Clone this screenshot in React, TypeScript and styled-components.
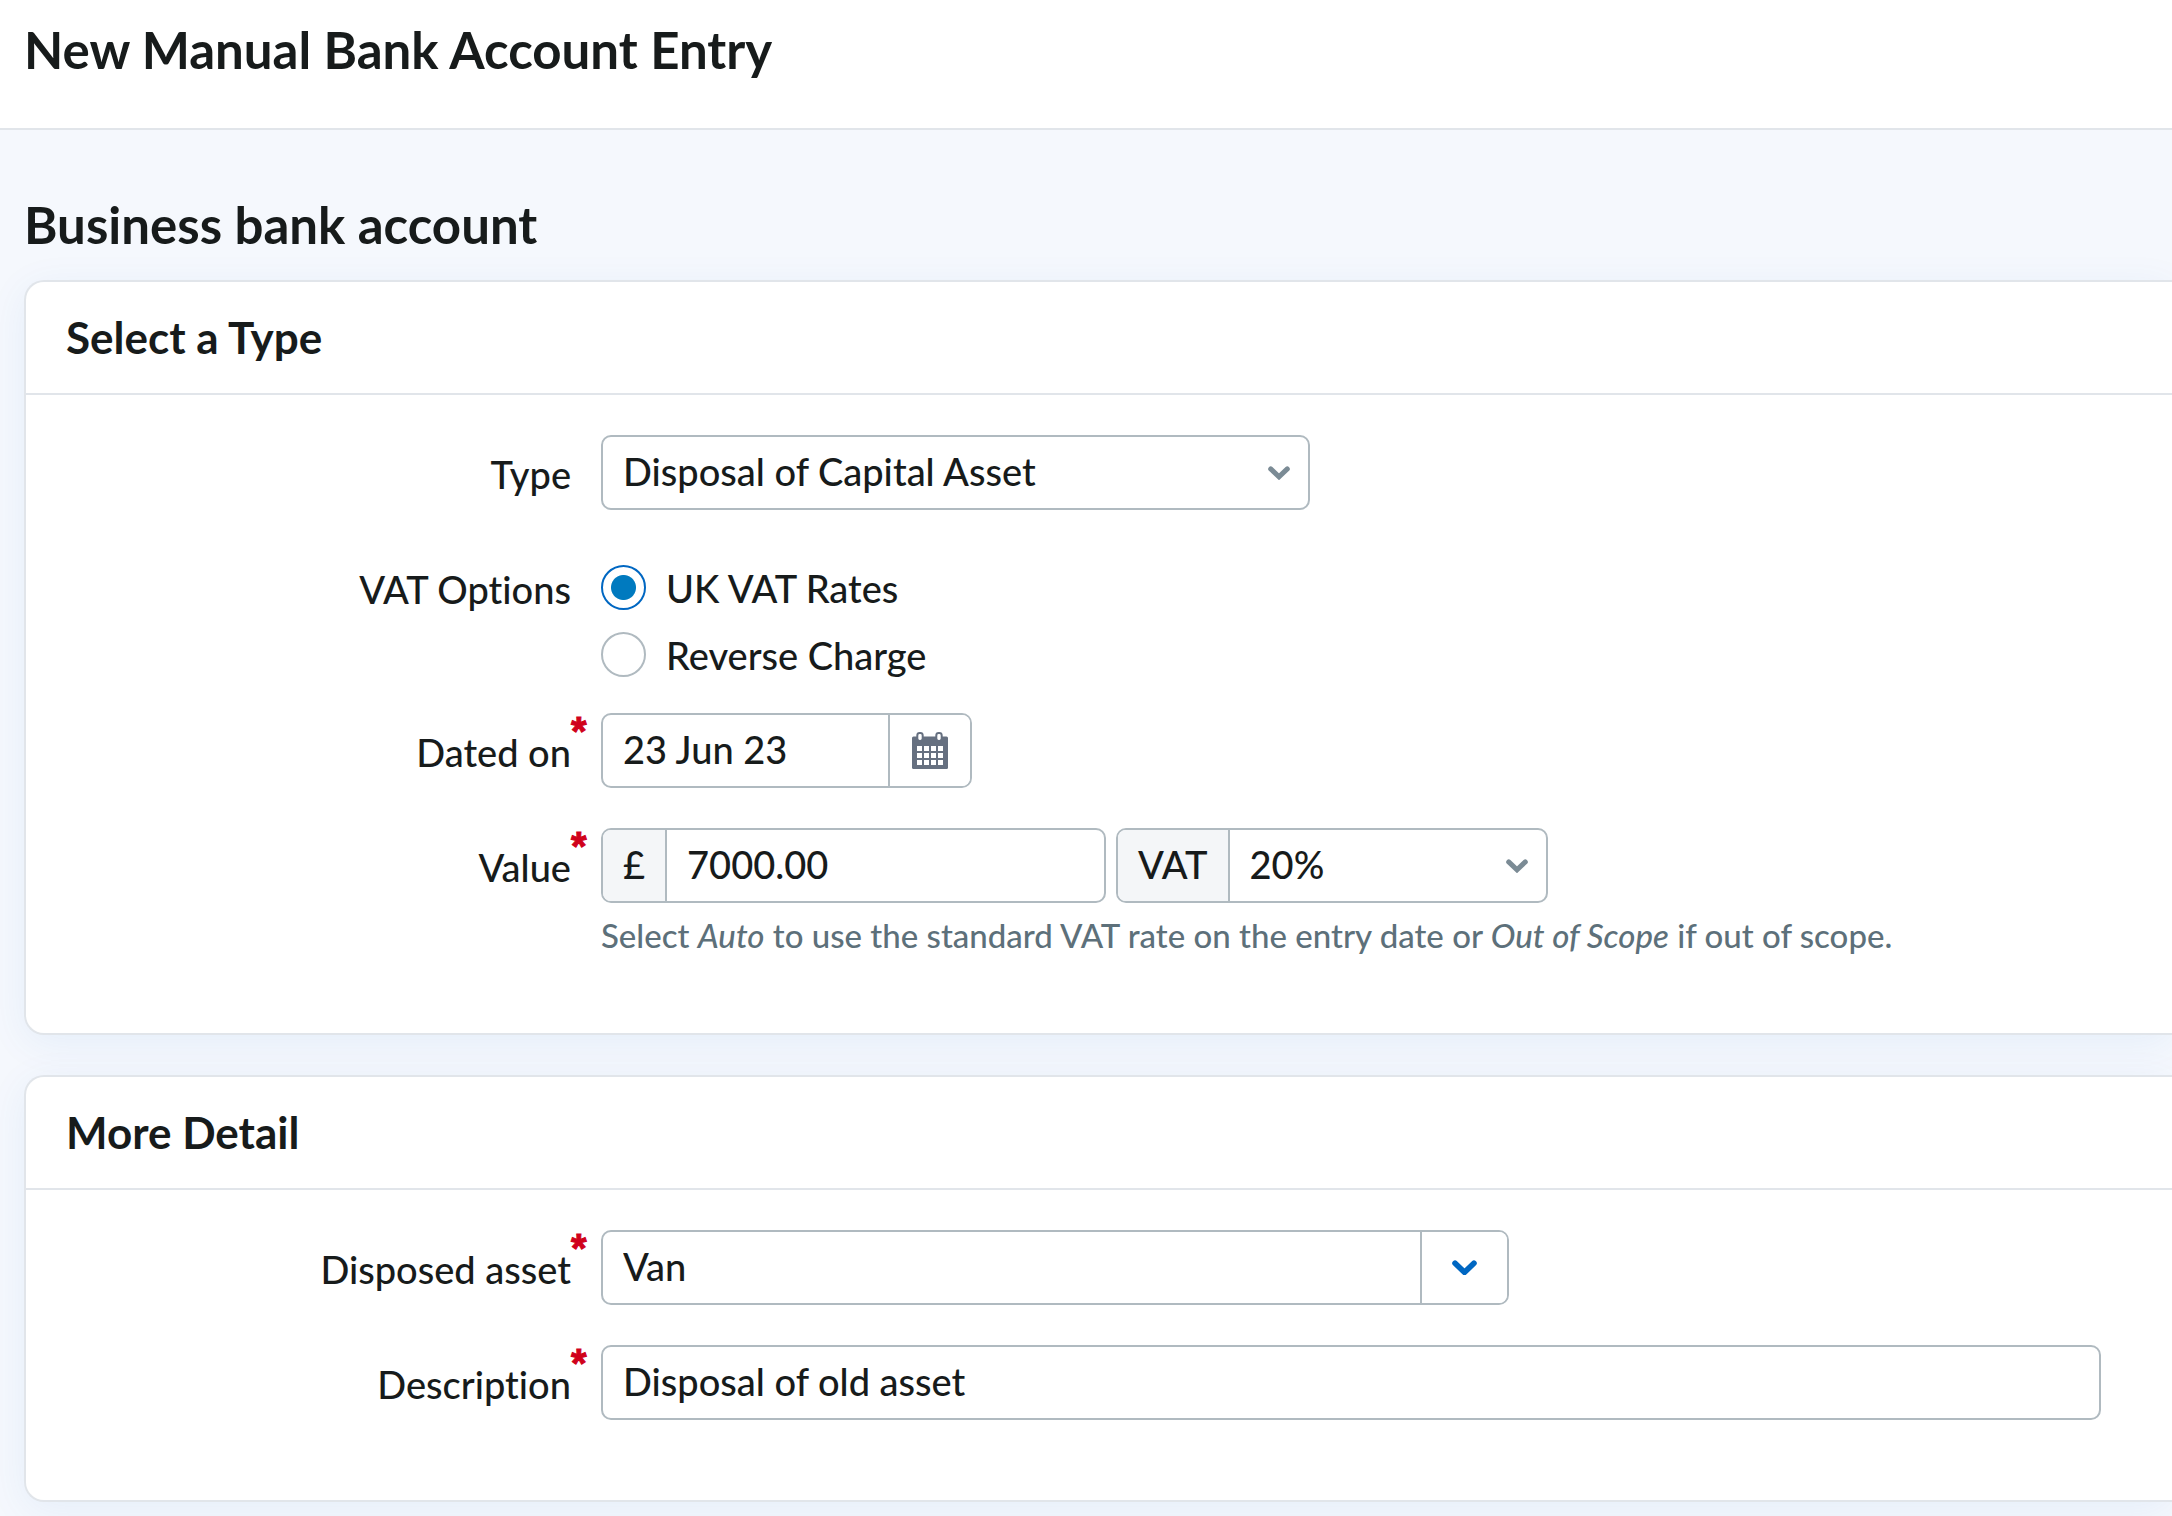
import React, { useState } from 'react';
import styled, { createGlobalStyle } from 'styled-components';

const color = {
  text: '#171b1b',
  hint: '#5d707a',
  line: '#e1e5ea',
  fieldLine: '#b0bac0',
  addon: '#f4f6f8',
  page: '#f5f8fd',
  arrow: '#7b8b95',
  blue: '#0067c2',
  dot: '#007abf',
  required: '#d0021b',
  calendar: '#667080',
};

const GlobalStyle = createGlobalStyle`
  *, *::before, *::after { box-sizing: border-box; }
  body {
    margin: 0;
    background: ${color.page};
    color: ${color.text};
    font-family: Lato, "Liberation Sans", sans-serif;
    font-size: 38px;
    font-weight: 500;
    font-variant-ligatures: none;
    overflow-x: hidden;
  }
`;

const PageHeader = styled.header`
  padding: 20px 24px 48px;
  background: #fff;
  border-bottom: 2px solid ${color.line};
`;

const Heading = styled.h1`
  margin: 0;
  font-size: 51px;
  font-weight: 700;
  line-height: 60px;
`;

const Main = styled.main`
  display: flex;
  flex-direction: column;
  padding: 65px 0 14px 24px;
  overflow: hidden;
`;

const AccountHeading = styled(Heading)`
  margin-bottom: 25px;
`;

const Cards = styled.form`
  display: flex;
  flex-direction: column;
  gap: 40px;
`;

const Card = styled.section`
  background: #fff;
  border: 2px solid ${color.line};
  border-right: 0;
  border-radius: 20px 0 0 20px;
  box-shadow: 0 8px 40px rgba(0, 100, 200, 0.07);
`;

const CardHeader = styled.div`
  padding: 25px 40px 26px;
  border-bottom: 2px solid ${color.line};
`;

const CardTitle = styled.h2`
  margin: 0;
  font-size: 44px;
  font-weight: 700;
  line-height: 60px;
`;

const CardBody = styled.div`
  padding: 40px 71px 80px 0;
`;

const Row = styled.div<{ $gap?: number }>`
  display: grid;
  grid-template-columns: 575px minmax(0, 1fr);
  align-items: start;
  margin-bottom: ${(p) => p.$gap ?? 40}px;

  &:last-child {
    margin-bottom: 0;
  }
`;

const Label = styled.label`
  display: flex;
  justify-content: flex-end;
  height: 75px;
  line-height: 78px;
`;

const Mark = styled.span`
  width: 30px;
  color: ${color.required};
  font-family: "Liberation Sans", sans-serif;
  font-size: 40px;
  font-weight: 700;
  line-height: 36px;
  -webkit-text-stroke: 1px ${color.required};
`;

const Group = styled.div<{ $width?: number }>`
  position: relative;
  display: flex;
  width: ${(p) => (p.$width ? `${p.$width}px` : '100%')};
  max-width: 100%;
  height: 75px;
  border: 2px solid ${color.fieldLine};
  border-radius: 10px;
  background: #fff;
  overflow: hidden;
`;

const Input = styled.input`
  flex: 1;
  min-width: 0;
  padding: 0 20px 4px;
  border: 0;
  outline: 0;
  background: none;
  color: inherit;
  font: inherit;
`;

const Select = styled.select`
  flex: 1;
  min-width: 0;
  padding: 0 60px 4px 20px;
  border: 0;
  outline: 0;
  appearance: none;
  background: none;
  color: inherit;
  font: inherit;
`;

const Addon = styled.label`
  display: flex;
  align-items: center;
  padding: 0 20px 4px;
  border-right: 2px solid ${color.fieldLine};
  background: ${color.addon};
`;

const IconButton = styled.button<{ $width: number }>`
  display: flex;
  align-items: center;
  justify-content: center;
  width: ${(p) => p.$width}px;
  padding: 0;
  border: 0;
  border-left: 2px solid ${color.fieldLine};
  background: #fff;
  cursor: pointer;
`;

const SelectArrow = styled.span`
  position: absolute;
  top: 0;
  bottom: 0;
  right: 18px;
  display: flex;
  align-items: center;
  pointer-events: none;
`;

const Inline = styled.div`
  display: flex;
  gap: 10px;
`;

const Hint = styled.p`
  margin: 14px 0 0;
  color: ${color.hint};
  font-size: 33px;
  line-height: 36px;
`;

const Options = styled.div`
  display: flex;
  flex-direction: column;
  gap: 22px;
  padding-top: 15px;
`;

const Option = styled.label`
  display: flex;
  align-items: center;
  gap: 20px;
  height: 45px;
`;

const Radio = styled.input`
  width: 45px;
  height: 45px;
  margin: 0;
  appearance: none;
  border: 2px solid ${color.fieldLine};
  border-radius: 50%;
  background: #fff;

  &:checked {
    border-color: ${color.blue};
    background: radial-gradient(circle, ${color.dot} 12px, #fff 13px);
  }
`;

function Chevron({ tint, width }: { tint: string; width: number }) {
  return (
    <svg width={width} height={(width * 14) / 22} viewBox="0 0 22 14" fill="none" aria-hidden="true">
      <path d="M2.7 2.9 11 10.8 19.3 2.9" stroke={tint} strokeWidth="5" strokeLinecap="round" />
    </svg>
  );
}

function CalendarIcon() {
  return (
    <svg width="36" height="37" viewBox="0 0 36 37" aria-hidden="true">
      <rect x="0" y="4.5" width="36" height="32.5" rx="1.5" fill={color.calendar} />
      {[6.5, 25.5].map((x) => (
        <rect key={x} x={x - 1.2} y="1" width="5.4" height="8" rx="2.4" fill="#fff" stroke={color.calendar} strokeWidth="2" />
      ))}
      {[14, 21, 28].map((y) => [5, 12, 19, 26].map((x) => <rect key={`${x}-${y}`} x={x} y={y} width="5" height="5" fill="#fff" />))}
    </svg>
  );
}

function FieldLabel({ htmlFor, text, required }: { htmlFor?: string; text: string; required?: boolean }) {
  return (
    <Label htmlFor={htmlFor} as={htmlFor ? 'label' : 'div'} id={htmlFor ? undefined : 'vat-options'}>
      {text}
      <Mark>{required ? '*' : ''}</Mark>
    </Label>
  );
}

export default function App() {
  const [vat, setVat] = useState('uk');
  return (
    <>
      <GlobalStyle />
      <PageHeader>
        <Heading>New Manual Bank Account Entry</Heading>
      </PageHeader>
      <Main>
        <AccountHeading as="h2">Business bank account</AccountHeading>
        <Cards>
          <Card>
            <CardHeader>
              <CardTitle>Select a Type</CardTitle>
            </CardHeader>
            <CardBody>
              <Row>
                <FieldLabel htmlFor="type" text="Type" />
                <Group $width={709}>
                  <Select id="type">
                    <option>Disposal of Capital Asset</option>
                  </Select>
                  <SelectArrow>
                    <Chevron tint={color.arrow} width={22} />
                  </SelectArrow>
                </Group>
              </Row>
              <Row $gap={36}>
                <FieldLabel text="VAT Options" />
                <Options role="radiogroup" aria-labelledby="vat-options">
                  <Option>
                    <Radio type="radio" name="vat" checked={vat === 'uk'} onChange={() => setVat('uk')} />
                    UK VAT Rates
                  </Option>
                  <Option>
                    <Radio type="radio" name="vat" checked={vat === 'reverse'} onChange={() => setVat('reverse')} />
                    Reverse Charge
                  </Option>
                </Options>
              </Row>
              <Row>
                <FieldLabel htmlFor="dated" text="Dated on" required />
                <Group $width={371}>
                  <Input id="dated" defaultValue="23 Jun 23" />
                  <IconButton type="button" $width={82} aria-label="Choose a date">
                    <CalendarIcon />
                  </IconButton>
                </Group>
              </Row>
              <Row>
                <FieldLabel htmlFor="value" text="Value" required />
                <div>
                  <Inline>
                    <Group $width={505}>
                      <Addon htmlFor="value">£</Addon>
                      <Input id="value" defaultValue="7000.00" />
                    </Group>
                    <Group $width={432}>
                      <Addon htmlFor="rate">VAT</Addon>
                      <Select id="rate">
                        <option>20%</option>
                      </Select>
                      <SelectArrow>
                        <Chevron tint={color.arrow} width={22} />
                      </SelectArrow>
                    </Group>
                  </Inline>
                  <Hint>
                    Select <em>Auto</em> to use the standard VAT rate on the entry date or <em>Out of Scope</em> if out of scope.
                  </Hint>
                </div>
              </Row>
            </CardBody>
          </Card>
          <Card>
            <CardHeader>
              <CardTitle>More Detail</CardTitle>
            </CardHeader>
            <CardBody>
              <Row>
                <FieldLabel htmlFor="asset" text="Disposed asset" required />
                <Group $width={908}>
                  <Input id="asset" defaultValue="Van" />
                  <IconButton type="button" $width={87} aria-label="Show assets">
                    <Chevron tint={color.blue} width={25} />
                  </IconButton>
                </Group>
              </Row>
              <Row>
                <FieldLabel htmlFor="description" text="Description" required />
                <Group>
                  <Input id="description" defaultValue="Disposal of old asset" />
                </Group>
              </Row>
            </CardBody>
          </Card>
        </Cards>
      </Main>
    </>
  );
}
